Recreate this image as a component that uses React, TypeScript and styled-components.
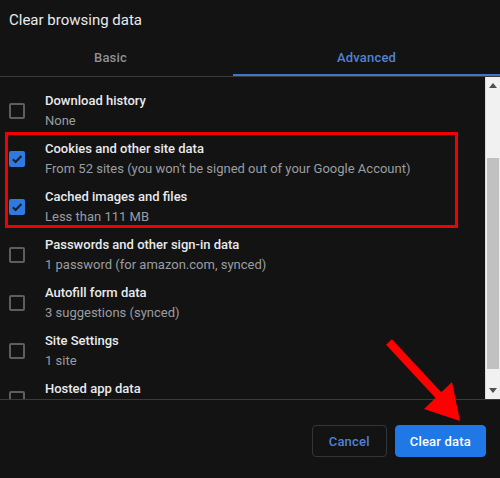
import React, { useLayoutEffect, useRef } from "react";
import styled, { createGlobalStyle } from "styled-components";

const Global = createGlobalStyle`
  html, body { margin: 0; padding: 0; background: #131313; }
  body { font-family: Roboto, "Noto Sans", Arial, sans-serif; -webkit-font-smoothing: antialiased; }
  * { box-sizing: border-box; }
`;

const Dialog = styled.div`
  position: relative;
  width: 500px;
  height: 478px;
  background: #131313;
  display: flex;
  flex-direction: column;
  overflow: hidden;
`;

const Title = styled.h1`
  margin: 0;
  padding: 8px 9px 5px;
  font-size: 15px;
  line-height: 24px;
  font-weight: 400;
  color: #e8eaed;
`;

const TabBar = styled.div`
  display: grid;
  grid-template-columns: 233px 1fr;
  height: 41px;
  border-bottom: 1px solid #3a3a3a;
`;

const Tab = styled.div<{ $active?: boolean; $shift?: number }>`
  display: flex;
  align-items: center;
  justify-content: center;
  padding-top: 3px;
  padding-right: ${(p) => p.$shift ?? 0}px;
  font-size: 13px;
  font-weight: 500;
  letter-spacing: 0.2px;
  color: ${(p) => (p.$active ? "#4f82d8" : "#8e9196")};
  border-bottom: 2px solid ${(p) => (p.$active ? "#4274cc" : "transparent")};
`;

const Body = styled.div`
  display: flex;
  height: 323px;
  border-bottom: 1px solid #3a3a3a;
`;

const Viewport = styled.div`
  flex: 1;
  overflow: hidden;
`;

const Row = styled.div<{ $extra?: number }>`
  display: flex;
  align-items: center;
  gap: 20px;
  height: ${(p) => 48 + (p.$extra ?? 0)}px;
  padding: 4px 0 ${(p) => 4 + (p.$extra ?? 0)}px 9px;
`;

const Box = styled.div<{ $checked?: boolean }>`
  flex: none;
  width: 16px;
  height: 16px;
  border-radius: 2px;
  border: ${(p) => (p.$checked ? "none" : "2px solid #5e5e5e")};
  background: ${(p) => (p.$checked ? "#2f7ae0" : "transparent")};
  display: flex;
  align-items: center;
  justify-content: center;
`;

const Texts = styled.div`
  display: flex;
  flex-direction: column;
`;

const ItemTitle = styled.div`
  font-size: 13px;
  line-height: 20px;
  font-weight: 500;
  color: #e8eaed;
  white-space: nowrap;
`;

const ItemSub = styled.div`
  font-size: 13px;
  line-height: 20px;
  color: #9a9da1;
  white-space: nowrap;
`;

const Highlight = styled.div`
  position: relative;
  &::after {
    content: "";
    position: absolute;
    top: -3px;
    bottom: 3px;
    left: 5px;
    right: 27px;
    border: 3px solid #f00000;
    pointer-events: none;
  }
`;

const Scrollbar = styled.div`
  flex: none;
  width: 15px;
  background: #f1f1f1;
  display: flex;
  flex-direction: column;
  align-items: center;
  border-left: 1px solid #dcdcdc;
`;

const ScrollArrow = styled.div`
  height: 17px;
  width: 100%;
  display: flex;
  align-items: center;
  justify-content: center;
`;

const Track = styled.div`
  flex: 1;
  width: 100%;
  display: flex;
  flex-direction: column;
  padding: 64px 1px 0 1px;
`;

const Thumb = styled.div`
  height: 211px;
  background: #c1c1c1;
`;

const Footer = styled.div`
  display: flex;
  justify-content: flex-end;
  gap: 8px;
  padding: 25px 14px 21px;
`;

const Button = styled.button<{ $primary?: boolean }>`
  height: 32px;
  padding: 0 ${(p) => (p.$primary ? 14 : 16)}px;
  border-radius: 4px;
  font-family: Roboto, Arial, sans-serif;
  font-size: 13px;
  font-weight: 500;
  letter-spacing: 0.2px;
  border: 1px solid ${(p) => (p.$primary ? "#1f78e6" : "#333639")};
  background: ${(p) => (p.$primary ? "#1f78e6" : "transparent")};
  color: ${(p) => (p.$primary ? "#ffffff" : "#4f82d8")};
`;

const ArrowOverlay = styled.svg`
  position: absolute;
  left: 0;
  top: 0;
  pointer-events: none;
`;

const Check = () => (
  <svg width="12" height="12" viewBox="0 0 12 12">
    <path d="M1.8 6.2 L4.6 9 L10.4 3" fill="none" stroke="#14202e" strokeWidth="2" />
  </svg>
);

type Item = { title: string; sub: string; checked?: boolean; extra?: number };

const before: Item[] = [
  { title: "Browsing history", sub: "Clears history from all synced devices", extra: 6 },
  { title: "Download history", sub: "None" },
];
const highlighted: Item[] = [
  { title: "Cookies and other site data", sub: "From 52 sites (you won't be signed out of your Google Account)", checked: true },
  { title: "Cached images and files", sub: "Less than 111 MB", checked: true },
];
const after: Item[] = [
  { title: "Passwords and other sign-in data", sub: "1 password (for amazon.com, synced)" },
  { title: "Autofill form data", sub: "3 suggestions (synced)" },
  { title: "Site Settings", sub: "1 site" },
  { title: "Hosted app data", sub: "5 apps (Gmail, Google Drive and 3 more)" },
  { title: "Media licenses", sub: "None" },
];

const ItemRow = ({ item }: { item: Item }) => (
  <Row $extra={item.extra}>
    <Box $checked={item.checked}>{item.checked && <Check />}</Box>
    <Texts>
      <ItemTitle>{item.title}</ItemTitle>
      <ItemSub>{item.sub}</ItemSub>
    </Texts>
  </Row>
);

export default function App() {
  const ref = useRef<HTMLDivElement>(null);
  useLayoutEffect(() => {
    if (ref.current) ref.current.scrollTop = 44;
  }, []);
  return (
    <>
      <Global />
      <Dialog>
        <Title>Clear browsing data</Title>
        <TabBar>
          <Tab $shift={12}>Basic</Tab>
          <Tab $active>Advanced</Tab>
        </TabBar>
        <Body>
          <Viewport ref={ref}>
            {before.map((i) => (
              <ItemRow key={i.title} item={i} />
            ))}
            <Highlight>
              {highlighted.map((i) => (
                <ItemRow key={i.title} item={i} />
              ))}
            </Highlight>
            {after.map((i) => (
              <ItemRow key={i.title} item={i} />
            ))}
          </Viewport>
          <Scrollbar>
            <ScrollArrow>
              <svg width="8" height="5" viewBox="0 0 8 5">
                <path d="M0 5 L4 0 L8 5 Z" fill="#505050" />
              </svg>
            </ScrollArrow>
            <Track>
              <Thumb />
            </Track>
            <ScrollArrow>
              <svg width="8" height="5" viewBox="0 0 8 5">
                <path d="M0 0 L4 5 L8 0 Z" fill="#505050" />
              </svg>
            </ScrollArrow>
          </Scrollbar>
        </Body>
        <Footer>
          <Button>Cancel</Button>
          <Button $primary>Clear data</Button>
        </Footer>
        <ArrowOverlay width="500" height="478" viewBox="0 0 500 478">
          <line x1="389" y1="342" x2="442" y2="399" stroke="#ff0000" strokeWidth="8" />
          <polygon points="424,409 452,382 460,421" fill="#ff0000" />
        </ArrowOverlay>
      </Dialog>
    </>
  );
}
